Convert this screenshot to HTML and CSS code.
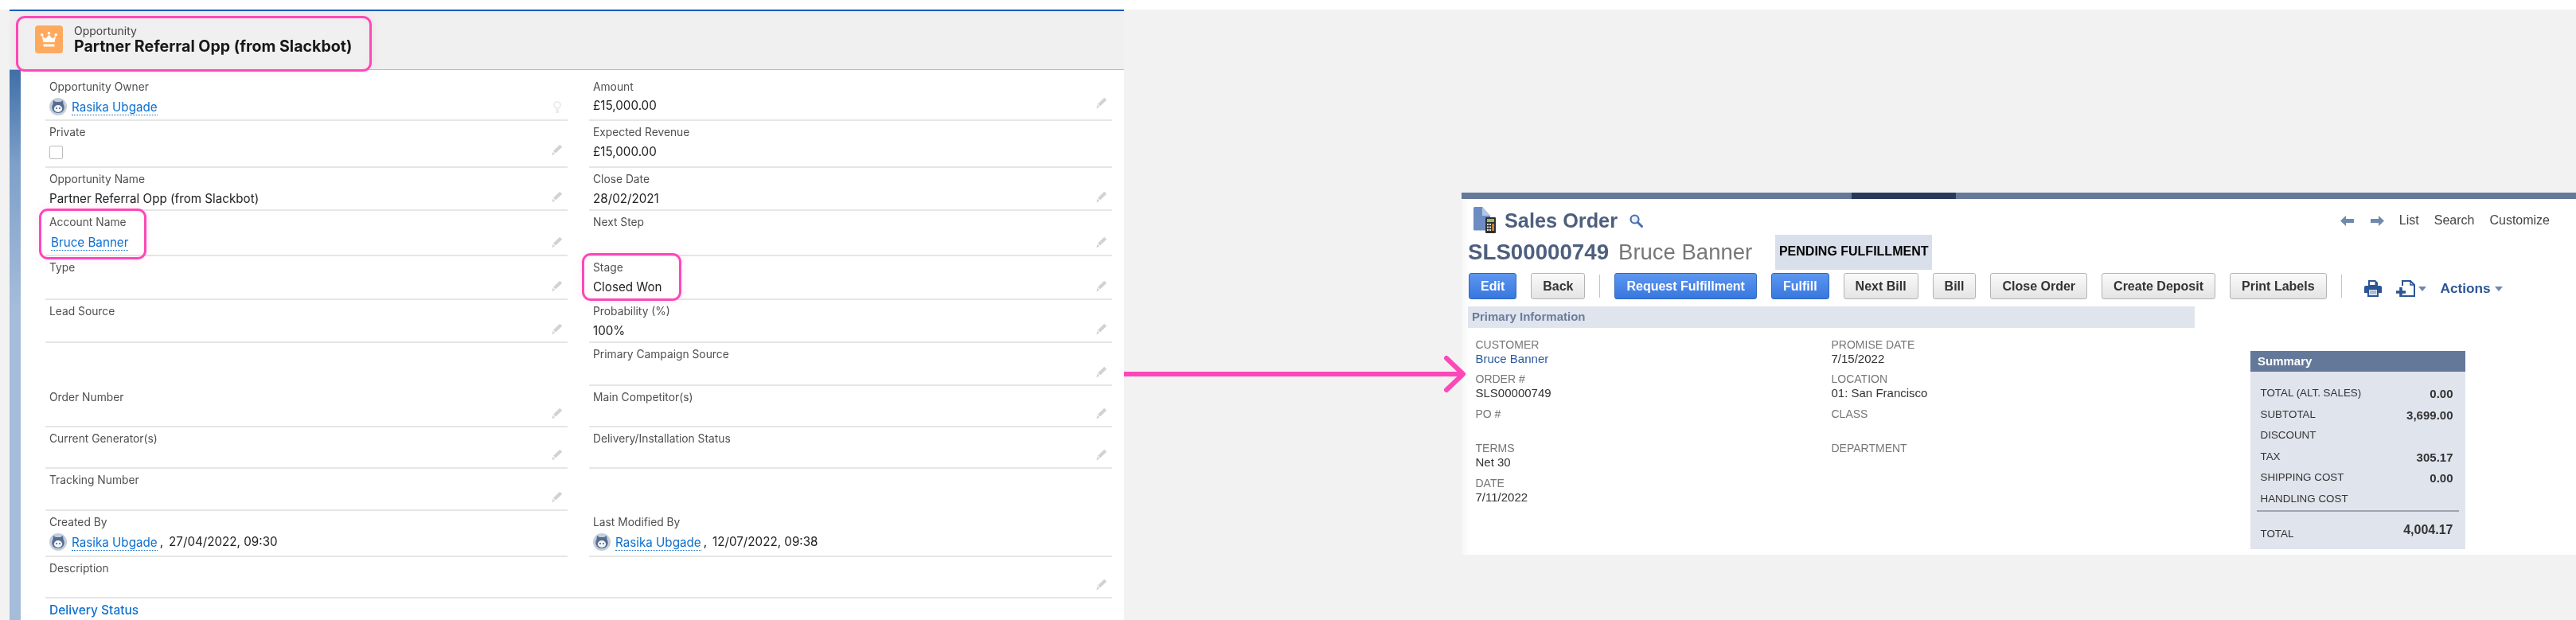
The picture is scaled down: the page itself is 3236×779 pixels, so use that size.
FILE: index.html
```html
<!DOCTYPE html>
<html lang="en">
<head>
<meta charset="utf-8">
<title>Opportunity to Sales Order</title>
<link rel="stylesheet" href="styles.css">
</head>
<body>
<svg width="0" height="0" class="defs">
  <defs>
    <symbol id="pen" viewBox="0 0 14 15">
      <path d="M10.2 .8l3 2.9L5 11.6 2 8.8z M1.5 9.8l2.6 2.5L.4 14.6z" fill="#d2d2d2"/>
    </symbol>
    <symbol id="avatar" viewBox="0 0 22 22">
      <circle cx="11" cy="11" r="11" fill="#c3cedd"/>
      <path d="M5 3l3 2h6l3-2 .6 5c1.2 2 1.4 4 .8 6-1 3.2-3.8 5-7.4 5s-6.4-1.8-7.4-5c-.6-2-.4-4 .8-6z" fill="#566c8f"/>
      <ellipse cx="11" cy="13.5" rx="5.2" ry="4.4" fill="#f4f6f9"/>
      <circle cx="9" cy="13" r=".9" fill="#3c4f6e"/>
      <circle cx="13" cy="13" r=".9" fill="#3c4f6e"/>
    </symbol>
  </defs>
</svg>
<div class="board">
  <section class="record">
    <div class="record-top"></div>
    <header class="record-head">
      <span class="crown-tile">
        <svg width="21" height="20" viewBox="0 0 21 20"><circle cx="1.8" cy="3.8" r="1.8" fill="#fff"/><circle cx="10.5" cy="1.8" r="1.8" fill="#fff"/><circle cx="19.2" cy="3.8" r="1.8" fill="#fff"/><path d="M1.8 5l4.4 3.4 4.3-5 4.3 5L19.2 5l-1.6 8H3.4z" fill="#fff"/><rect x="3.5" y="15.5" width="14" height="3" rx=".6" fill="#fff"/></svg>
      </span>
      <div class="record-titles">
        <div class="record-type">Opportunity</div>
        <h1 class="record-name">Partner Referral Opp (from Slackbot)</h1>
      </div>
    </header>
    <div class="record-body">
      <div class="strip"></div>
      <div class="form">
        <div class="cell">
          <div class="lbl">Opportunity Owner</div>
          <div class="val"><svg class="avatar"><use href="#avatar"/></svg><a class="lnk">Rasika Ubgade</a></div>
          <svg class="person" width="14" height="18" viewBox="0 0 14 18"><circle cx="7" cy="6" r="4" fill="none" stroke="#ececec" stroke-width="2"/><path d="M5 11h4v5H5z" fill="#ececec"/></svg>
        </div>
        <div class="cell">
          <div class="lbl">Amount</div>
          <div class="val val-high">£15,000.00</div>
          <svg class="pen pen-up"><use href="#pen"/></svg>
        </div>

        <div class="cell">
          <div class="lbl">Private</div>
          <div class="val"><span class="check"></span></div>
          <svg class="pen pen-up"><use href="#pen"/></svg>
        </div>
        <div class="cell">
          <div class="lbl">Expected Revenue</div>
          <div class="val">£15,000.00</div>
        </div>

        <div class="cell">
          <div class="lbl">Opportunity Name</div>
          <div class="val">Partner Referral Opp (from Slackbot)</div>
          <svg class="pen"><use href="#pen"/></svg>
        </div>
        <div class="cell">
          <div class="lbl">Close Date</div>
          <div class="val">28/02/2021</div>
          <svg class="pen"><use href="#pen"/></svg>
        </div>

        <div class="cell">
          <div class="lbl">Account Name</div>
          <div class="val val-indent"><a class="lnk">Bruce Banner</a></div>
          <svg class="pen"><use href="#pen"/></svg>
        </div>
        <div class="cell">
          <div class="lbl">Next Step</div>
          <div class="val"></div>
          <svg class="pen"><use href="#pen"/></svg>
        </div>

        <div class="cell">
          <div class="lbl">Type</div>
          <div class="val"></div>
          <svg class="pen"><use href="#pen"/></svg>
        </div>
        <div class="cell">
          <div class="lbl">Stage</div>
          <div class="val">Closed Won</div>
          <svg class="pen"><use href="#pen"/></svg>
        </div>

        <div class="cell">
          <div class="lbl">Lead Source</div>
          <div class="val"></div>
          <svg class="pen"><use href="#pen"/></svg>
        </div>
        <div class="cell">
          <div class="lbl">Probability (%)</div>
          <div class="val">100%</div>
          <svg class="pen"><use href="#pen"/></svg>
        </div>

        <div class="cell cell-open"></div>
        <div class="cell">
          <div class="lbl">Primary Campaign Source</div>
          <div class="val"></div>
          <svg class="pen"><use href="#pen"/></svg>
        </div>

        <div class="cell">
          <div class="lbl">Order Number</div>
          <div class="val"></div>
          <svg class="pen"><use href="#pen"/></svg>
        </div>
        <div class="cell">
          <div class="lbl">Main Competitor(s)</div>
          <div class="val"></div>
          <svg class="pen"><use href="#pen"/></svg>
        </div>

        <div class="cell">
          <div class="lbl">Current Generator(s)</div>
          <div class="val"></div>
          <svg class="pen"><use href="#pen"/></svg>
        </div>
        <div class="cell">
          <div class="lbl">Delivery/Installation Status</div>
          <div class="val"></div>
          <svg class="pen"><use href="#pen"/></svg>
        </div>

        <div class="cell">
          <div class="lbl">Tracking Number</div>
          <div class="val"></div>
          <svg class="pen"><use href="#pen"/></svg>
        </div>
        <div class="cell cell-open"></div>

        <div class="cell">
          <div class="lbl">Created By</div>
          <div class="val"><svg class="avatar"><use href="#avatar"/></svg><a class="lnk">Rasika Ubgade</a><span class="comma">,</span><span>27/04/2022, 09:30</span></div>
        </div>
        <div class="cell">
          <div class="lbl">Last Modified By</div>
          <div class="val"><svg class="avatar"><use href="#avatar"/></svg><a class="lnk">Rasika Ubgade</a><span class="comma">,</span><span>12/07/2022, 09:38</span></div>
        </div>

        <div class="cell cell-wide">
          <div class="lbl">Description</div>
          <div class="val"></div>
          <svg class="pen"><use href="#pen"/></svg>
        </div>

        <div class="section-link">Delivery Status</div>
      </div>
    </div>
  </section>

  <section class="order">
    <div class="order-bar"><span class="order-bar-active"></span></div>
    <div class="order-title-row">
      <div class="order-title">
        <svg class="doc-icon" width="29" height="33" viewBox="0 0 29 33">
          <path d="M1 1.5A1.5 1.5 0 0 1 2.5 0H12l10 11v17a1.5 1.5 0 0 1-1.5 1.5h-18A1.5 1.5 0 0 1 1 28z" fill="#6d8cc4"/>
          <path d="M12 0l10 11H12z" fill="#b5c6e4"/>
          <rect x="16" y="13" width="13" height="20" rx="1" fill="#2f2f2f"/>
          <rect x="18" y="15" width="9" height="4" fill="#9db86f"/>
          <path d="M18 21h2v2h-2zM21 21h2v2h-2zM18 24.5h2v2h-2zM21 24.5h2v2h-2zM18 28h2v2h-2zM21 28h2v2h-2z" fill="#e6e6e6"/>
          <rect x="24.3" y="21" width="2.5" height="9" fill="#d98f3a"/>
        </svg>
        <span class="order-word">Sales Order</span>
        <svg class="order-search" width="17" height="17" viewBox="0 0 17 17"><circle cx="6.5" cy="6.5" r="5" fill="#e9eff8" stroke="#4a70ad" stroke-width="2.2"/><path d="M10.5 10.5l5 5" stroke="#4a70ad" stroke-width="3" stroke-linecap="round"/></svg>
      </div>
      <nav class="order-nav">
        <svg width="17" height="13" viewBox="0 0 17 13"><path d="M7 0v4h10v5H7v4L0 6.5z" fill="#7089ad"/></svg>
        <svg class="nav-next" width="17" height="13" viewBox="0 0 17 13"><path d="M10 0v4H0v5h10v4l7-6.5z" fill="#7089ad"/></svg>
        <span class="nav-list">List</span>
        <span class="nav-item">Search</span>
        <span class="nav-item">Customize</span>
      </nav>
    </div>
    <div class="order-id-row">
      <span class="order-num">SLS00000749</span>
      <span class="order-cust">Bruce Banner</span>
      <span class="order-badge">PENDING FULFILLMENT</span>
    </div>
    <div class="toolbar">
      <button class="btn btn-primary">Edit</button>
      <button class="btn">Back</button>
      <span class="tool-sep"></span>
      <button class="btn btn-primary">Request Fulfillment</button>
      <button class="btn btn-primary">Fulfill</button>
      <button class="btn">Next Bill</button>
      <button class="btn">Bill</button>
      <button class="btn">Close Order</button>
      <button class="btn">Create Deposit</button>
      <button class="btn">Print Labels</button>
      <span class="tool-sep"></span>
      <svg class="tool-print" width="22" height="21" viewBox="0 0 22 21"><path d="M5 0h9l3 3v5H5z" fill="#2c5596"/><path d="M7 2h6.5v4H7z" fill="#fff"/><path d="M2 7h18a2 2 0 0 1 2 2v7h-4v5H4v-5H0V9a2 2 0 0 1 2-2z" fill="#2c5596"/><path d="M6 12h10v7H6z" fill="#d7dfeb"/><path d="M7 14h8M7 16h8" stroke="#7f95b8"/></svg>
      <svg class="tool-new" width="24" height="21" viewBox="0 0 24 21"><path d="M8 7V1h10l5 5v14H8" fill="none" stroke="#2c5596" stroke-width="2"/><path d="M18 1v5h5" fill="none" stroke="#2c5596" stroke-width="1.5"/><path d="M6 9v12M0 15h12" stroke="#2c5596" stroke-width="3.6"/></svg>
      <span class="caret caret-new"></span>
      <span class="actions">Actions</span>
      <span class="caret"></span>
    </div>
    <div class="section-bar">Primary Information</div>
    <div class="order-body">
      <div class="fields">
        <div class="field"><div class="f-lbl">CUSTOMER</div><div class="f-val f-link">Bruce Banner</div></div>
        <div class="field"><div class="f-lbl">PROMISE DATE</div><div class="f-val">7/15/2022</div></div>
        <div class="field"><div class="f-lbl">ORDER #</div><div class="f-val">SLS00000749</div></div>
        <div class="field"><div class="f-lbl">LOCATION</div><div class="f-val">01: San Francisco</div></div>
        <div class="field"><div class="f-lbl">PO #</div></div>
        <div class="field"><div class="f-lbl">CLASS</div></div>
        <div class="field"><div class="f-lbl">TERMS</div><div class="f-val">Net 30</div></div>
        <div class="field"><div class="f-lbl">DEPARTMENT</div></div>
        <div class="field"><div class="f-lbl">DATE</div><div class="f-val">7/11/2022</div></div>
      </div>
      <aside class="summary">
        <div class="sum-head">Summary</div>
        <div class="sum-body">
          <div class="sum-row"><span>TOTAL (ALT. SALES)</span><b>0.00</b></div>
          <div class="sum-row"><span>SUBTOTAL</span><b>3,699.00</b></div>
          <div class="sum-row"><span>DISCOUNT</span></div>
          <div class="sum-row"><span>TAX</span><b>305.17</b></div>
          <div class="sum-row"><span>SHIPPING COST</span><b>0.00</b></div>
          <div class="sum-row"><span>HANDLING COST</span></div>
          <div class="sum-rule"></div>
          <div class="sum-total"><span>TOTAL</span><b>4,004.17</b></div>
        </div>
      </aside>
    </div>
  </section>

  <div class="mark mark-title"></div>
  <div class="mark mark-account"></div>
  <div class="mark mark-stage"></div>
  <svg class="arrow" width="430" height="50" viewBox="0 0 430 50"><path d="M0 25h425M405 5l21 20-21 20" fill="none" stroke="#fd48b8" stroke-width="6" stroke-linecap="round" stroke-linejoin="round"/></svg>
</div>
</body>
</html>
```

FILE: styles.css
```css
* { box-sizing: border-box; }
html, body { margin: 0; padding: 0; }
body { width: 3236px; height: 779px; overflow: hidden; background: #fff; }
.defs { position: absolute; }
.board {
  position: relative;
  width: 3236px;
  height: 779px;
  padding-top: 12px;
  display: flex;
  overflow: hidden;
  background: linear-gradient(#fff 12px, #f2f2f2 12px);
}

/* ---------- Salesforce record ---------- */
.record {
  width: 1400px;
  height: 767px;
  margin-left: 12px;
  display: flex;
  flex-direction: column;
  background: #fff;
  font-family: Inter, "Noto Sans", sans-serif;
  color: #222;
  filter: blur(.5px);
}
.record-top { height: 2px; background: #0b5cbe; flex: none; }
.record-head {
  flex: none;
  height: 74px;
  display: flex;
  background: #f0f0f0;
  border-bottom: 1px solid #b9b9b9;
  padding: 18px 0 0 32px;
  gap: 14px;
}
.crown-tile {
  width: 35px;
  height: 35px;
  border-radius: 4px;
  background: #ffa95e;
  display: flex;
  align-items: center;
  justify-content: center;
}
.record-type { font-size: 14px; line-height: 16px; color: #444; margin-top: -1px; }
.record-name { margin: -1px 0 0; font-size: 19.6px; line-height: 24px; font-weight: 700; color: #181818; }
.record-body { flex: 1; display: flex; min-height: 0; }
.strip { width: 14px; flex: none; background: linear-gradient(#3f70a8 0, #7fa0c9 120px, #a5bcdb 300px, #a5bcdb 100%); }
.form {
  flex: 1;
  padding: 7px 0 0 31px;
  display: grid;
  grid-template-columns: 656px 657px;
  column-gap: 27px;
  grid-template-rows: 57px 59px 54px 57px 55px 54px 54px 52px 52px 53px 58px 52px 30px;
  align-content: start;
  width: 1340px;
}
.cell {
  display: grid;
  grid-template-columns: 1fr auto;
  grid-template-rows: 18px 20px;
  row-gap: 6px;
  align-content: start;
  padding: 5px 4px 0 5px;
  border-bottom: 2px solid #e6e6e6;
  position: relative;
  min-height: 0;
}
.cell-open { border-bottom: none; }
.cell-wide { grid-column: 1 / span 2; width: 1340px; }
.lbl { grid-column: 1; grid-row: 1; font-size: 13.8px; line-height: 18px; color: #505050; white-space: nowrap; }
.val {
  grid-column: 1;
  grid-row: 2;
  font-size: 15.2px;
  line-height: 20px;
  color: #222;
  display: flex;
  align-items: center;
  white-space: nowrap;
}
.val-high { margin-top: -2px; }
.val-indent { padding-left: 2px; }
.lnk { color: #0c6fcf; border-bottom: 1px dotted #0c6fcf; line-height: 18px; margin-top: 2px; }
.avatar { width: 22px; height: 22px; margin-right: 6px; flex: none; margin-top: -1px; }
.comma { margin: 0 7px 0 3px; }
.check { width: 17px; height: 17px; border: 1px solid #bdbdbd; border-radius: 2px; background: #fff; margin-top: 1px; display: block; }
.pen { width: 14px; height: 15px; position: absolute; right: 6px; bottom: 8px; }
.pen-up { bottom: 13px; }
.person { position: absolute; right: 6px; bottom: 6px; }
.section-link { grid-column: 1 / span 2; padding: 5px 0 0 5px; font-size: 15.5px; line-height: 20px; color: #0c6fcf; font-weight: 500; }

/* ---------- NetSuite sales order ---------- */
.order {
  width: 1400px;
  height: 455px;
  margin: 230px 0 0 424px;
  background: linear-gradient(90deg, #f6f6f6, #fff 10px);
  font-family: "Liberation Sans", Arial, sans-serif;
  flex: none;
  filter: blur(.4px);
}
.order-bar { height: 8px; background: #64789a; padding-left: 490px; }
.order-bar-active { display: block; width: 131px; height: 8px; background: #27385a; }
.order-title-row {
  height: 45px;
  padding: 10px 33px 0 14px;
  display: flex;
  justify-content: space-between;
  align-items: flex-start;
}
.order-title { display: flex; align-items: center; height: 33px; }
.order-word { font-size: 25.3px; font-weight: 700; color: #4d5f7e; margin-left: 11px; line-height: 30px; }
.order-search { margin-left: 15px; margin-top: 2px; }
.order-nav { display: flex; align-items: center; height: 34px; font-size: 16px; color: #444; }
.nav-next { margin-left: 21px; }
.nav-list { margin-left: 19px; }
.nav-item { margin-left: 19px; }
.order-id-row { height: 44px; padding-left: 8px; display: flex; align-items: center; }
.order-num { font-size: 27.7px; font-weight: 700; color: #4d5f7e; }
.order-cust { font-size: 27.5px; color: #777; margin-left: 12px; }
.order-badge {
  margin-left: 29px;
  height: 44px;
  width: 197px;
  background: #d9e0eb;
  color: #000;
  font-size: 16px;
  font-weight: 700;
  display: flex;
  align-items: center;
  justify-content: center;
  white-space: nowrap;
  padding-bottom: 3px;
}
.toolbar { height: 33px; margin-top: 4px; padding-left: 9px; display: flex; align-items: center; gap: 18px; }
.btn {
  height: 33px;
  padding: 0 14px;
  margin: 0;
  font: 700 16px/1 "Liberation Sans", Arial, sans-serif;
  color: #333;
  border: 1px solid #b4b4b4;
  border-radius: 3px;
  background: linear-gradient(#fafafa, #e4e4e4);
  white-space: nowrap;
}
.btn-primary { color: #fff; border-color: #2f68bd; background: linear-gradient(#5c96ef, #3877df); }
.tool-sep { width: 1px; height: 29px; background: #c4c4c4; }
.tool-print { margin-left: 10px; margin-top: 6px; }
.tool-new { margin-top: 6px; }
.caret { width: 0; height: 0; border-left: 5px solid transparent; border-right: 5px solid transparent; border-top: 6px solid #6f87ab; margin: 6px 0 0 -13px; }
.caret-new { margin-left: -14px; }
.actions { font-size: 17.2px; font-weight: 700; color: #2c5596; margin-top: 5px; }
.section-bar {
  width: 912.5px;
  height: 27px;
  margin: 9px 0 0 8px;
  padding-left: 5px;
  background: #e0e4ed;
  font-size: 15px;
  line-height: 26px;
  font-weight: 700;
  color: #6a7d9d;
}
.order-body { display: flex; align-items: flex-start; padding-left: 17.5px; }
.fields {
  width: 973.5px;
  padding-top: 12.5px;
  display: grid;
  grid-template-columns: 447px 447px;
  grid-auto-rows: 43.5px;
}
.f-lbl { font-size: 14px; line-height: 17px; color: #777; }
.f-val { font-size: 15px; line-height: 17px; color: #333; }
.f-link { color: #2d5a9e; }
.summary { width: 270px; height: 249px; margin-top: 29px; background: #e0e4ed; flex: none; }
.sum-head { height: 26px; padding-left: 9px; background: #64789a; color: #fff; font-size: 15px; line-height: 25px; font-weight: 700; }
.sum-body { padding: 14px 0 0; }
.sum-row, .sum-total {
  display: flex;
  justify-content: space-between;
  padding: 0 15.5px 0 12.5px;
  height: 26.6px;
  line-height: 26px;
  font-size: 13.4px;
  color: #333;
}
.sum-row b { font-size: 15px; line-height: 27px; }
.sum-rule { height: 2px; margin: 0 8.5px 0 8px; background: #a0a4ae; }
.sum-total { height: 50px; align-items: flex-start; padding-top: 15px; }
.sum-total b { font-size: 16px; line-height: 16px; }

/* ---------- Annotations ---------- */
.mark {
  position: absolute;
  border: 3.5px solid #fd48b8;
  border-radius: 11px;
  box-shadow: 0 0 12px rgba(253, 72, 184, .12), inset 0 0 12px rgba(253, 72, 184, .04);
  pointer-events: none;
}
.mark-title { left: 20px; top: 20px; width: 447px; height: 70px; }
.mark-account { left: 49px; top: 262px; width: 135px; height: 64px; }
.mark-stage { left: 731px; top: 318px; width: 125px; height: 60px; }
.arrow { position: absolute; left: 1412px; top: 445px; }
```
